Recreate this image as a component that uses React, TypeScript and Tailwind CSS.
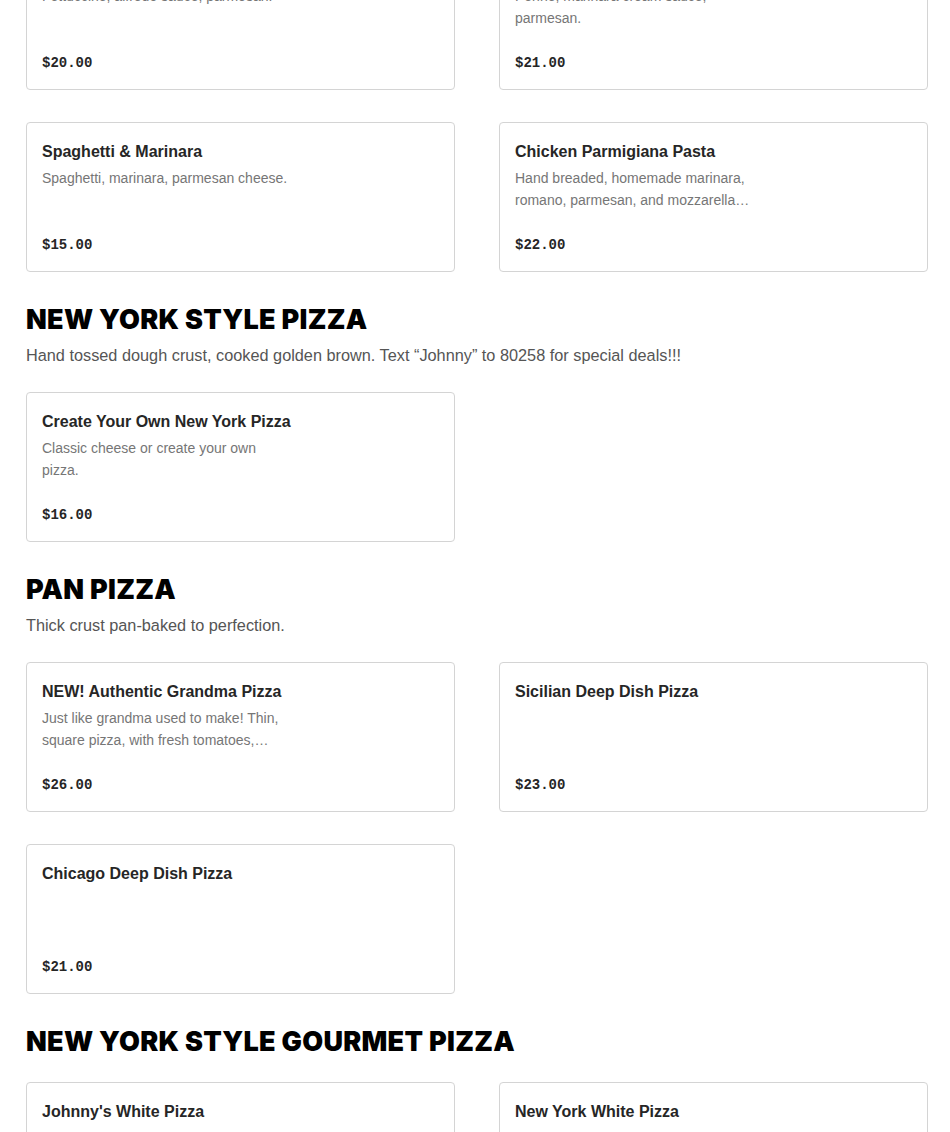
import React from 'react';

type Item = {
  name: string;
  description?: string;
  price: string;
};

type Section = {
  title?: string;
  description?: string;
  items: Item[];
};

const sections: Section[] = [
  {
    items: [
      { name: 'Fettuccine Alfredo', description: 'Fettuccine, alfredo sauce, parmesan.', price: '$20.00' },
      { name: 'Penne alla Vodka', description: 'Penne, marinara cream sauce, parmesan.', price: '$21.00' },
      { name: 'Spaghetti & Marinara', description: 'Spaghetti, marinara, parmesan cheese.', price: '$15.00' },
      {
        name: 'Chicken Parmigiana Pasta',
        description: 'Hand breaded, homemade marinara, romano, parmesan, and mozzarella cheese over spaghetti.',
        price: '$22.00',
      },
    ],
  },
  {
    title: 'NEW YORK STYLE PIZZA',
    description: 'Hand tossed dough crust, cooked golden brown. Text \u201cJohnny\u201d to 80258 for special deals!!!',
    items: [{ name: 'Create Your Own New York Pizza', description: 'Classic cheese or create your own pizza.', price: '$16.00' }],
  },
  {
    title: 'PAN PIZZA',
    description: 'Thick crust pan-baked to perfection.',
    items: [
      {
        name: 'NEW! Authentic Grandma Pizza',
        description: 'Just like grandma used to make! Thin, square pizza, with fresh tomatoes, mozzarella, garlic and basil.',
        price: '$26.00',
      },
      { name: 'Sicilian Deep Dish Pizza', price: '$23.00' },
      { name: 'Chicago Deep Dish Pizza', price: '$21.00' },
    ],
  },
  {
    title: 'NEW YORK STYLE GOURMET PIZZA',
    items: [
      { name: "Johnny's White Pizza", description: 'Ricotta, mozzarella, garlic and olive oil.', price: '$24.00' },
      { name: 'New York White Pizza', description: 'Mozzarella, ricotta, garlic and fresh basil.', price: '$24.00' },
    ],
  },
];

function MenuCard({ item }: { item: Item }) {
  return (
    <div className="flex h-[150px] flex-col rounded border border-[#d4d4d4] bg-white px-[15px] pt-[17px] pb-4">
      <h3 className="text-[16px] leading-6 font-semibold text-[#262626]">{item.name}</h3>
      {item.description && (
        <p className="mt-[3px] line-clamp-2 max-w-[250px] text-[14px] leading-[22px] text-[#767676]">
          {item.description}
        </p>
      )}
      <div className="mt-auto font-['Liberation_Mono',monospace] text-[14px] leading-5 font-bold text-[#262626]">
        {item.price}
      </div>
    </div>
  );
}

export default function App() {
  return (
    <div className="min-h-screen bg-white font-['Liberation_Sans',Arial,sans-serif]">
      <div className="-mt-[60px] ml-[26px] flex w-[902px] flex-col">
        {sections.map((section, i) => (
          <section key={i} className={i > 0 ? 'mt-[30px]' : ''}>
            {section.title && (
              <h2
                className={`font-['Inter',sans-serif] text-[27px] leading-9 font-black tracking-[0.3px] text-black ${
                  section.description ? 'mb-[5px]' : 'mb-[22px]'
                }`}
              >
                {section.title}
              </h2>
            )}
            {section.description && (
              <p className="mb-[25px] text-[16.3px] leading-6 text-[#555555]">{section.description}</p>
            )}
            <div className="grid grid-cols-2 gap-x-11 gap-y-8">
              {section.items.map((item) => (
                <MenuCard key={item.name} item={item} />
              ))}
            </div>
          </section>
        ))}
      </div>
    </div>
  );
}
